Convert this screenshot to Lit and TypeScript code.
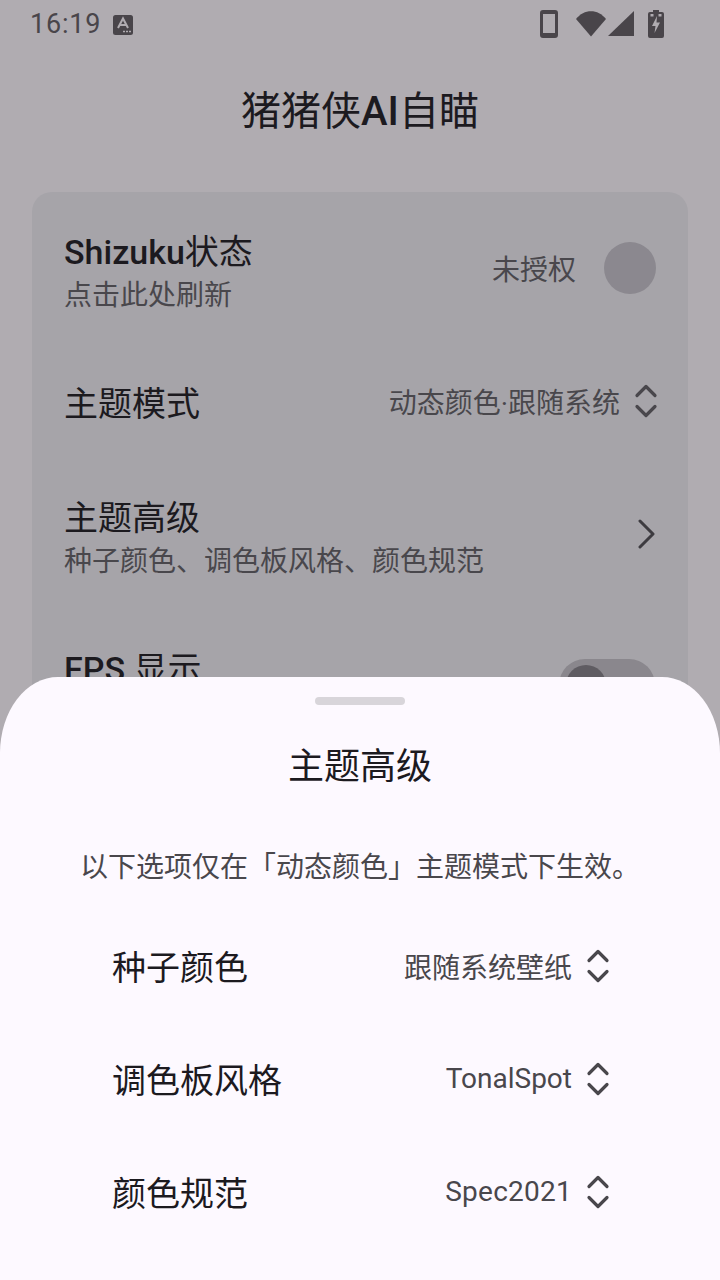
import { LitElement, html, css, svg } from 'lit';
import { customElement } from 'lit/decorators.js';

const updown = svg`<path d="M3 11.5 L12 2.5 L21 11.5 M3 22.5 L12 31.5 L21 22.5" fill="none" stroke="currentColor" stroke-width="3.2" stroke-linecap="round" stroke-linejoin="round"/>`;

interface SheetRow {
  label: string;
  value: string;
  spaced?: boolean;
}

const sheetRows: SheetRow[] = [
  { label: '种子颜色', value: '跟随系统壁纸' },
  { label: '调色板风格', value: 'TonalSpot' },
  { label: '颜色规范', value: 'Spec2021', spaced: true },
];

@customElement('app-root')
export class AppRoot extends LitElement {
  static styles = css`
    :host {
      display: block;
      position: relative;
      width: 720px;
      height: 1280px;
      overflow: hidden;
      background: #b0acb1;
      color: #1c1a1f;
      font-family: Roboto, "Noto Sans CJK SC", sans-serif;
    }
    .status {
      height: 48px;
      display: flex;
      align-items: center;
      padding: 0 56px 2px 30px;
      color: #49454a;
    }
    .time {
      font-size: 27px;
      letter-spacing: 0.8px;
      line-height: 46px;
    }
    .a-icon {
      margin-left: 12px;
      margin-top: 1px;
    }
    .status-icons {
      margin-left: auto;
      display: flex;
      align-items: center;
    }
    .phone { margin-right: 16px; }
    .wifi { margin-right: 2px; }
    .signal { margin-right: 14px; }
    .title {
      margin-top: 34px;
      height: 56px;
      line-height: 56px;
      text-align: center;
      font-size: 40px;
    }
    .latin {
      font-weight: 500;
    }
    .card {
      margin: 52px 32px 0;
      height: 700px;
      border-radius: 20px;
      background: #a6a4a9;
      padding: 8px 32px 0 32px;
    }
    .row {
      display: flex;
      align-items: center;
      justify-content: space-between;
    }
    .row-1 { height: 136px; }
    .row-2 { height: 132px; }
    .row-3 { height: 133px; }
    .row-4 { height: 158px; }
    .name {
      font-size: 34px;
      line-height: 42px;
    }
    .text-block {
      padding-top: 8px;
    }
    .row-2 .name {
      padding-top: 3px;
    }
    .row-2 .picker {
      margin-bottom: 2px;
    }
    .row-4 .name {
      margin-bottom: 22px;
    }
    .sub {
      margin-top: 5px;
      font-size: 28px;
      line-height: 36px;
      color: #49474c;
    }
    .right {
      display: flex;
      align-items: center;
      color: #49474c;
      font-size: 28px;
    }
    .dot {
      width: 52px;
      height: 52px;
      border-radius: 50%;
      background: #8b888f;
      margin-left: 28px;
    }
    .picker svg {
      margin-left: 14px;
      margin-right: -2px;
    }
    .chev {
      color: #3d3b40;
      margin-bottom: 1px;
    }
    .switch {
      width: 96px;
      height: 52px;
      margin: 10px 1px 0 0;
      border-radius: 26px;
      background: #8a878d;
      display: flex;
      align-items: center;
      padding-left: 7px;
      box-sizing: border-box;
    }
    .knob {
      width: 40px;
      height: 40px;
      border-radius: 50%;
      background: #5f5c62;
    }
    .sheet {
      position: absolute;
      left: 0;
      right: 0;
      top: 677px;
      bottom: 0;
      background: #fdf9ff;
      border-radius: 58px 58px 0 0 / 76px 76px 0 0;
      display: flex;
      flex-direction: column;
      align-items: center;
    }
    .handle {
      margin-top: 20px;
      width: 90px;
      height: 8px;
      border-radius: 4px;
      background: #d8d5da;
    }
    .sheet-title {
      margin-top: 39px;
      font-size: 36px;
      line-height: 46px;
    }
    .note {
      margin-top: 58px;
      font-size: 28px;
      line-height: 40px;
      color: #49474c;
    }
    .options {
      margin-top: 21px;
      width: 498px;
      display: flex;
      flex-direction: column;
    }
    .option {
      height: 113px;
      padding: 0 1px;
      display: flex;
      align-items: center;
      justify-content: space-between;
    }
    .option .name {
      padding-top: 4px;
    }
    .spaced {
      letter-spacing: 0.25px;
    }
  `;

  render() {
    return html`
      <div class="status">
        <span class="time">16:19</span>
        <svg class="a-icon" width="20" height="20" viewBox="0 0 20 20">
          <rect width="20" height="20" rx="2.5" fill="currentColor"/>
          <path d="M5 13 L10 3.5 L15 13 M7 10 H13" fill="none" stroke="#b0acb1" stroke-width="2"/>
          <path d="M10 16.5 h2 M13 16.5 h2 M16 16.5 h2" stroke="#b0acb1" stroke-width="1.6"/>
        </svg>
        <div class="status-icons">
          <svg class="phone" width="20" height="28" viewBox="0 0 20 28">
            <path fill-rule="evenodd" fill="currentColor" d="M3 0 H15 a3 3 0 0 1 3 3 V25 a3 3 0 0 1 -3 3 H3 a3 3 0 0 1 -3 -3 V3 a3 3 0 0 1 3 -3 Z M3 4 V23 H15 V4 Z"/>
          </svg>
          <svg class="wifi" width="30" height="26" viewBox="0 0 30 26">
            <path fill="currentColor" d="M0 8 C8 -2.500 22 -2.500 30 8 L15 25.500 Z"/>
          </svg>
          <svg class="signal" width="26" height="26" viewBox="0 0 26 26">
            <path fill="currentColor" d="M26 0 V25 H0 Z"/>
          </svg>
          <svg width="16" height="28" viewBox="0 0 16 28">
            <path fill="currentColor" d="M5 0 H11 V2 H14 a2 2 0 0 1 2 2 V26 a2 2 0 0 1 -2 2 H2 a2 2 0 0 1 -2 -2 V4 a2 2 0 0 1 2 -2 H5 Z"/>
            <path fill="#b0acb1" d="M2.500 4 h3 v2.500 h-3 Z M10.500 4 h3 v2.500 h-3 Z M9 6 L4 16 H7.500 L6.500 23 L12 12.500 H8.500 Z"/>
          </svg>
        </div>
      </div>

      <div class="title">猪猪侠<span class="latin">AI</span>自瞄</div>

      <div class="card">
        <div class="row row-1">
          <div class="text-block">
            <div class="name"><span class="latin">Shizuku</span>状态</div>
            <div class="sub">点击此处刷新</div>
          </div>
          <div class="right">未授权<span class="dot"></span></div>
        </div>
        <div class="row row-2">
          <div class="name">主题模式</div>
          <div class="right picker">
            动态颜色·跟随系统
            <svg width="24" height="34" viewBox="0 0 24 34">${updown}</svg>
          </div>
        </div>
        <div class="row row-3">
          <div class="text-block">
            <div class="name">主题高级</div>
            <div class="sub">种子颜色、调色板风格、颜色规范</div>
          </div>
          <svg class="chev" width="20" height="30" viewBox="0 0 20 30">
            <path d="M4 2 L17 15 L4 28" fill="none" stroke="currentColor" stroke-width="3" stroke-linecap="round" stroke-linejoin="round"/>
          </svg>
        </div>
        <div class="row row-4">
          <div class="name"><span class="latin">FPS</span> 显示</div>
          <div class="switch"><span class="knob"></span></div>
        </div>
      </div>

      <div class="sheet">
        <div class="handle"></div>
        <div class="sheet-title">主题高级</div>
        <div class="note">以下选项仅在「动态颜色」主题模式下生效。</div>
        <div class="options">
          ${sheetRows.map(r => html`
            <div class="option">
              <div class="name">${r.label}</div>
              <div class="right picker ${r.spaced ? 'spaced' : ''}">
                ${r.value}
                <svg width="24" height="34" viewBox="0 0 24 34">${updown}</svg>
              </div>
            </div>
          `)}
        </div>
      </div>
    `;
  }
}
